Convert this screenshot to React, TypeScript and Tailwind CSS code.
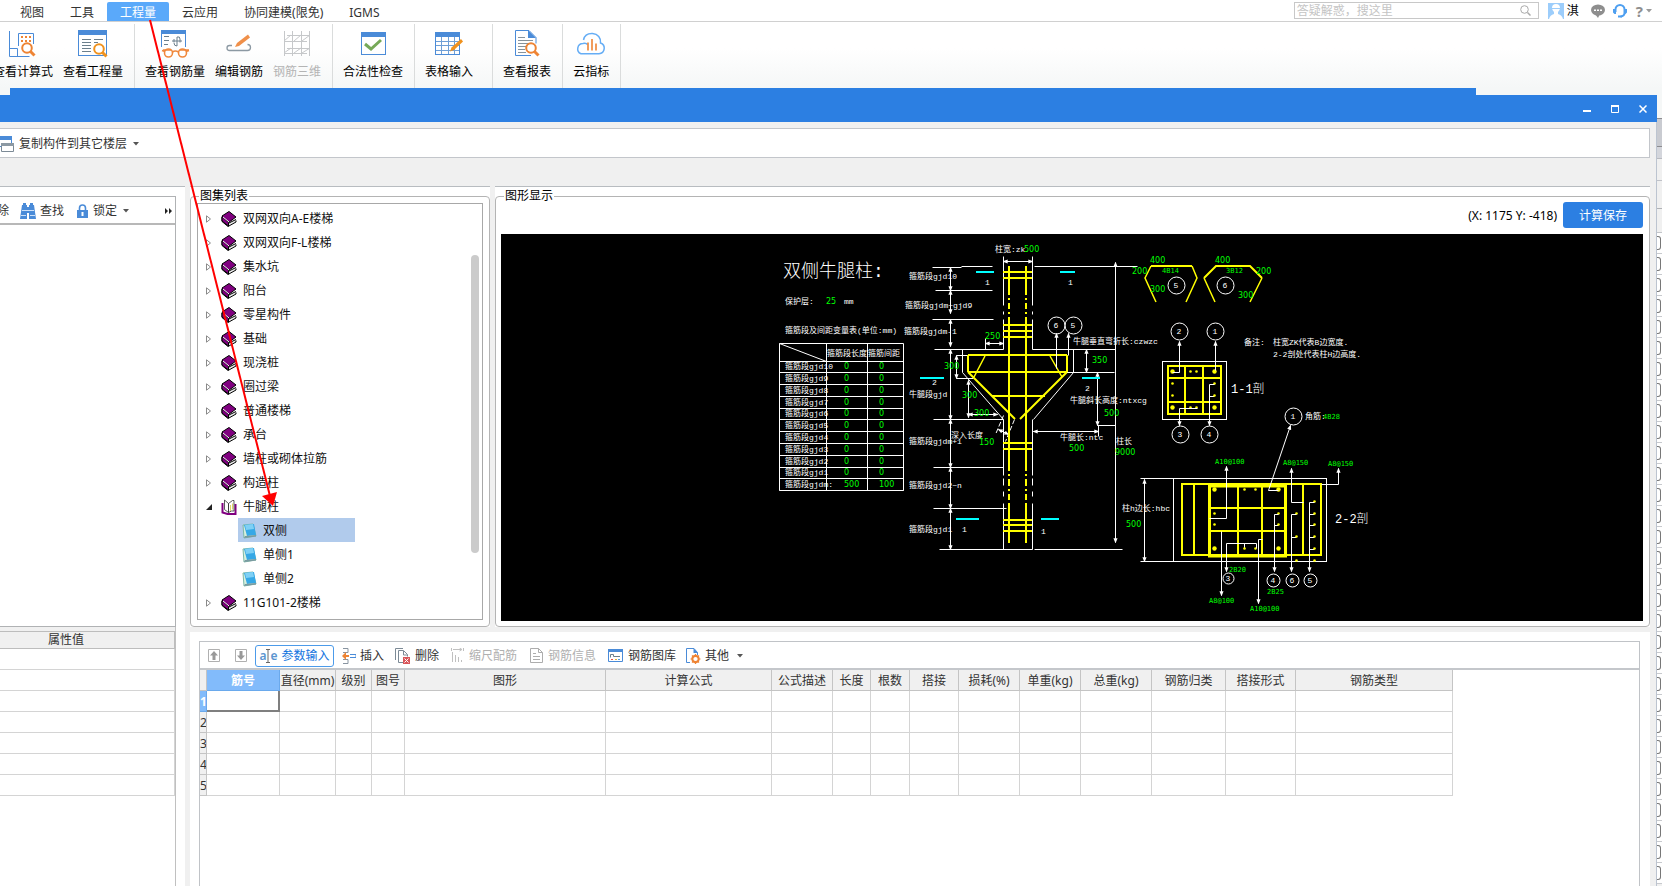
import type { ReactNode } from 'react'
import clsx from 'clsx'

const BLUE = '#4a8bd8'
const ORANGE = '#ee8434'

/* ---------- ribbon icons, 28x28 ---------- */

function Icon({ w = 28, h = 28, children }: { w?: number; h?: number; children: ReactNode }) {
  return (
    <svg width={w} height={h} viewBox={`0 0 ${w} ${h}`} fill="none" className="shrink-0" aria-hidden="true">
      {children}
    </svg>
  )
}

const Lens = ({ x, y, color = ORANGE }: { x: number; y: number; color?: string }) => (
  <g stroke={color}>
    <circle cx={x} cy={y} r="4.8" strokeWidth="2" fill="#fff" />
    <path d={`M${x + 3.5} ${y + 3.5}l4 4`} strokeWidth="3" />
  </g>
)

const FormulaIcon = () => (
  <Icon>
    <path d="M.5 1v25.500h20M.500 18.500h8v8M9.500 16V3.500h15V14" stroke={BLUE} />
    <path d="M12 6h2v2h-2zM16 6h2v2h-2zM20 6h2v2h-2zM12 10h2v2h-2zM16 10h2v2h-2zM20 10h2v2h-2z" fill={ORANGE} />
    <Lens x={18} y={18} />
  </Icon>
)

const QuantityIcon = () => (
  <Icon w={30}>
    <rect x=".5" y="-.5" width="28" height="26" stroke={BLUE} />
    <path d="M0 0h29v5H0z" fill={BLUE} />
    <path d="M4 9.500h9M4 12.500h9M4 15.500h9M4 18.500h9M4 21.500h9M16 9.500h9M16 12.500h4" stroke="#6b7f8c" />
    <Lens x={21} y={19} color="#f0921e" />
  </Icon>
)

const RebarViewIcon = () => (
  <Icon w={30}>
    <path d="M1.500 17V.5h24V17" stroke={BLUE} />
    <path d="M1 0h25v4H1z" fill={BLUE} />
    <path d="M4 6.500h5M4 10.500h5M4 14.500h4M12 11h10M17 7v9M14 9v3.500M20 9v3.500M17 7q3-1 3 2M17 16q-3 0-3-3" stroke="#6b7f8c" />
    <g stroke="#f0883c" strokeWidth="1.600">
      <circle cx="8.500" cy="23" r="4" fill="#fff" />
      <circle cx="22.500" cy="23" r="4" fill="#fff" />
      <path d="M12.500 22q2.700-2 6 0M2 20.500l3 1M29 20.500l-3 1M3 20h8M20 20h9" />
    </g>
  </Icon>
)

const RebarEditIcon = () => (
  <Icon>
    <path d="M7 15.500H4.500a2.500 2.500 0 0 0 0 5h18a3 3 0 0 0 0-6" stroke="#8c99a3" strokeWidth="1.300" />
    <path d="M23 4.500l2 3L14 16l-4 1 2-4z" fill="#f0904a" />
  </Icon>
)

const Rebar3dIcon = () => (
  <Icon>
    <path
      d="M1.500 1v25M9.500 1v25M18.500 1v25M26.500 1v25M4 5.500h23M1 11.500h23M4 18.500h23M1 23.500h23M1 11l7-6M11 11l7-6M19 11l8-6M1 23l7-5M11 23l7-5M19 23l8-5"
      stroke="#c6c8ca"
    />
  </Icon>
)

const CheckIcon = () => (
  <Icon>
    <rect x="2.500" y="2.500" width="24" height="22" stroke={BLUE} />
    <path d="M2 2h25v5H2z" fill={BLUE} />
    <path d="M6 14l6 5 10-9" stroke="#76a958" strokeWidth="3" />
  </Icon>
)

const TableIcon = () => (
  <Icon>
    <rect x=".5" y="2.500" width="24" height="22" stroke={BLUE} />
    <path d="M0 2h25v5H0z" fill={BLUE} />
    <path d="M6.500 7v17M13.500 7v17M19.500 7v17M1 11.500h23M1 15.500h23M1 20.500h23" stroke="#6f9fd6" />
    <path d="M26 9l2 2.500-9 8.500-4 1.500 1.500-4z" fill="#f0921e" />
  </Icon>
)

const ReportIcon = () => (
  <Icon>
    <path d="M18 25.500H2.500V.5H16l7 7v6" stroke={BLUE} />
    <path d="M15 0l8 8h-8z" fill={BLUE} />
    <path d="M5 7.500h7M5 10.500h15M5 13.500h12M5 16.500h8M5 19.500h7M5 22.500h8" stroke="#87939c" />
    <Lens x={18} y={18} />
  </Icon>
)

const CloudIcon = () => (
  <Icon w={32}>
    <path d="M8 13.500A5.300 5.300 0 0 0 6 23.700h18a5.500 5.500 0 0 0 1.500-10.700C26 8 23 4 17.500 3.600 13 3.400 9.500 5 8.500 10M8 13.500q3-1 4.500 1" stroke="#65adf5" strokeWidth="1.500" />
    <path d="M13 20.500v-8M17 20.500V9M21 20.500v-7" stroke={ORANGE} strokeWidth="1.600" />
  </Icon>
)

/* ---------- small icons ---------- */

const BookIcon = () => (
  <Icon w={16} h={16}>
    <path d="M1 6v4.500l6 5 8-4.500v-1.500" fill="#e8e8e8" stroke="#000" />
    <path d="M7 12.500l8-4" stroke="#000" />
    <path d="M1 5l7-4.500L15 6l-7.500 5.500z" fill="#800080" stroke="#000" />
    <path d="M1 5.500l6.500 6v3.500L1 10z" fill="#800080" stroke="#000" />
    <path d="M2 6l6 5" stroke="#fff" />
  </Icon>
)

const OpenBookIcon = () => (
  <Icon w={16} h={16}>
    <path d="M1.500 4v9.500l5 1.500h8V5" stroke="#800080" strokeWidth="2" />
    <path d="M3.500 1l4 3.500v9l-4-3zM7.500 4.500l4-3h1.500v10.500h-2.500l-3 1.500z" fill="#fff" stroke="#333" strokeWidth=".8" />
    <path d="M9.500 6v6M11.500 4.500v6" stroke="#e0d468" />
  </Icon>
)

const NoteIcon = () => (
  <Icon w={15} h={16}>
    <path d="M1 2l10-1 3 12-12 2z" fill="#d7f0dd" stroke="#7db8a8" />
    <path d="M2 2l10-1 2 11-9 1z" fill="#36a8e6" />
    <path d="M3 2l8-1 1 5-8 1z" fill="#7fd0f5" />
    <path d="M3 13l11-1v1.500L2 15z" fill="#7a9aa0" />
  </Icon>
)

const CaretDown = ({ className = 'text-[#555]' }: { className?: string }) => (
  <svg width="6" height="4" viewBox="0 0 6 4" className={clsx('shrink-0', className)} aria-hidden="true">
    <path d="M0 0h6L3 3.500z" fill="currentColor" />
  </svg>
)

/* ---------- CAD drawing ---------- */

type Line = [number, number, number, number]

const WHITE_LINES: Line[] = [
  // column outline
  [1003, 256, 1003, 305], [1003, 311, 1003, 314], [1003, 319, 1003, 349],
  [1003, 419, 1003, 475], [1003, 478, 1003, 485], [1003, 491, 1003, 496], [1003, 503, 1003, 549],
  [1032, 256, 1032, 305], [1032, 311, 1032, 314], [1032, 319, 1032, 349],
  [1032, 419, 1032, 475], [1032, 478, 1032, 485], [1032, 491, 1032, 496], [1032, 503, 1032, 549],
  // stirrup zone limits
  [932, 267, 961, 267], [961, 266, 992, 266], [1034, 266, 1137, 266], [935, 290, 992, 290],
  [932, 319, 993, 319], [934, 349, 1003, 349], [1032, 349, 1115, 349], [933, 419, 1003, 419],
  [933, 467, 1003, 467], [933, 508, 1006, 508], [939, 549, 1032, 549], [1034, 549, 1122, 549],
  // dimension extensions
  [956, 355, 968, 355], [956, 378, 973, 378], [985, 338, 985, 349],
  [1050, 372, 1114, 372], [1097, 425, 1115, 425], [1098, 425, 1098, 436],
  [962, 349, 962, 372], [1073, 349, 1073, 372],
  // 2-2 section
  [1140, 478, 1173, 478], [1140, 561, 1173, 561],
  [1274, 525, 1278, 525], [1291, 537, 1296, 537], [1309, 514, 1314, 514], [1309, 525, 1314, 525],
  [1309, 537, 1314, 537], [1309, 549, 1314, 549], [1244, 543, 1244, 548], [1209, 396, 1214, 396],
]

// arrow heads on both ends
const DIMENSIONS: Line[] = [
  [1003, 261, 1032, 261], [950, 267, 950, 290], [950, 290, 950, 313], [950, 319, 950, 346],
  [950, 349, 950, 419], [950, 419, 950, 467], [950, 467, 950, 508], [950, 508, 950, 549],
  [956, 355, 956, 378], [968, 380, 968, 417], [968, 414, 997, 414], [985, 343, 1003, 343],
  [998, 429, 1008, 434], [1086, 349, 1086, 372], [1097, 372, 1097, 425], [1033, 431, 1098, 431],
  [1115, 262, 1115, 542], [1144, 479, 1144, 561],
]

// arrow head on the last point
const LEADERS = [
  'M1056 368V333', 'M1068 355V333',
  'M1172 372H1179V341', 'M1215 370V341', 'M1197 408H1179V425', 'M1214 384H1209V425',
  'M1278 490H1268L1290 425', 'M1209 518H1226V466', 'M1303 502H1291V468', 'M1321 484H1338V468',
  'M1278 514H1274V571', 'M1296 514H1291V571', 'M1314 502H1309V571', 'M1221 531V595',
  'M1256 548V543H1226V571', 'M1262 539H1258V603',
]

const YELLOW_LINES: Line[] = [
  ...[272, 278, 325, 331, 337, 443, 449, 520, 525, 531].map((y): Line => [1003, y, 1032, y]),
  ...[1009, 1026].flatMap((x): Line[] => [
    [x, 266, x, 295], [x, 298, x, 300], [x, 303, x, 309], [x, 312, x, 314], [x, 317, x, 471],
    [x, 474, x, 476], [x, 479, x, 486], [x, 489, x, 491], [x, 494, x, 500], [x, 503, x, 543],
  ]),
  [968, 355, 1067, 355], [968, 372, 1067, 372], [968, 355, 968, 372], [1067, 355, 1067, 372],
  [968, 372, 1015, 419], [1067, 372, 1020, 419], [992, 396, 1045, 396],
  [1185, 366, 1185, 414], [1203, 366, 1203, 414], [1168, 378, 1221, 378], [1168, 402, 1221, 402],
  [1194, 484, 1194, 555], [1303, 484, 1303, 555], [1238, 486, 1238, 556], [1262, 486, 1262, 556],
  [1209, 508, 1286, 508], [1209, 531, 1286, 531],
]

const CYAN_LINES: Line[] = [
  [976, 272, 994, 272], [1060, 272, 1075, 272], [920, 378, 944, 378],
  [1082, 378, 1100, 378], [956, 519, 979, 519], [1041, 519, 1059, 519],
]

const BIG_BARS = [[1172, 371], [1214, 371], [1172, 407], [1214, 407], [1214, 489], [1278, 489], [1214, 548], [1278, 548]]
const BARS = [
  [1190, 371], [1196, 371], [1172, 383], [1172, 395], [1214, 383], [1214, 395], [1190, 407], [1196, 407],
  [1244, 489], [1255, 489], [1214, 513], [1214, 524], [1244, 548], [1255, 548], [1278, 513], [1278, 524],
  [1296, 513], [1296, 536], [1296, 560], [1314, 501], [1314, 513], [1314, 524], [1314, 536], [1314, 548], [1314, 560],
]

const BALLOONS: [number, number, number, string][] = [
  [1056, 325, 9, '6'], [1073, 325, 9, '5'], [1176, 285, 9, '5'], [1225, 285, 9, '6'],
  [1179, 331, 9, '2'], [1215, 331, 9, '1'], [1180, 434, 9, '3'], [1209, 434, 9, '4'],
  [1293, 416, 9, '1'], [1228, 578, 6, '3'], [1273, 580, 7, '4'], [1292, 580, 7, '6'], [1310, 580, 7, '5'],
]

const LABELS: [number, number, string][] = [
  [785, 304, '保护层:'], [844, 304, 'mm'], [785, 333, '箍筋段及间距变量表(单位:mm)'],
  [827, 356, '箍筋段长度'], [868, 356, '箍筋间距'], [995, 252, '柱宽:zk'],
  [909, 279, '箍筋段gjd10'], [905, 308, '箍筋段gjdm~gjd9'], [904, 334, '箍筋段gjdm-1'],
  [909, 397, '牛腿段gjd'], [951, 438, '深入长度'], [909, 444, '箍筋段gjdm+1'],
  [909, 488, '箍筋段gjd2~n'], [909, 532, '箍筋段gjd1'],
  [985, 285, '1'], [1068, 285, '1'], [932, 385, '2'], [1085, 391, '2'], [962, 532, '1'], [1041, 534, '1'],
  [1073, 344, '牛腿垂直弯折长:czwzc'], [1070, 403, '牛腿斜长高度:ntxcg'], [1060, 440, '牛腿长:ntc'],
  [1116, 444, '柱长'], [1244, 345, '备注:'], [1273, 345, '柱宽ZK代表B边宽度.'],
  [1273, 357, '2-2剖处代表柱H边高度.'], [1305, 419, '角筋:'], [1122, 511, '柱h边长:hbc'],
]

const VALUES: [number, number, string][] = [
  [826, 304, '25'], [1024, 252, '500'], [985, 339, '250'], [944, 369, '300'], [962, 398, '300'],
  [974, 416, '300'], [979, 445, '150'], [1092, 363, '350'], [1104, 416, '500'], [1069, 451, '500'],
  [1115, 455, '9000'], [1150, 263, '400'], [1132, 274, '200'], [1150, 292, '300'],
  [1215, 263, '400'], [1256, 274, '200'], [1238, 298, '300'], [1126, 527, '500'],
]

const SPECS: [number, number, string][] = [
  [1162, 273, '4B14'], [1226, 273, '3B12'], [1323, 419, '4B28'], [1215, 464, 'A10@100'],
  [1283, 465, 'A8@150'], [1328, 466, 'A8@150'], [1229, 572, '2B20'], [1267, 594, '2B25'],
  [1209, 603, 'A8@100'], [1250, 611, 'A10@100'],
]

const SPACING_ROWS = ['gjd10', 'gjd9', 'gjd8', 'gjd7', 'gjd6', 'gjd5', 'gjd4', 'gjd3', 'gjd2', 'gjd1', 'gjdm:']
const SPACING_Y = [372, 384, 396, 408, 419, 431, 443, 455, 467, 478, 490]

const toPath = (lines: Line[]) => lines.map(([a, b, c, d]) => `M${a} ${b}L${c} ${d}`).join('')

function CorbelDrawing() {
  return (
    <svg viewBox="501 234 1142 387" className="block w-full bg-black" fill="none" role="img" aria-label="双侧牛腿柱">
      <defs>
        <marker id="tip" viewBox="0 0 6 6" refX="5" refY="3" markerWidth="5" markerHeight="5" orient="auto-start-reverse">
          <path d="M0 .5L6 3 0 5.500z" fill="#fff" />
        </marker>
      </defs>

      <g transform="translate(.5 .5)" stroke="#fff">
        <path d={toPath(WHITE_LINES)} />
        <path d="M962 372L1003 419M1073 372L1033 419" />
        <path d="M1003 415L995 434M1014 419L1005 441" strokeDasharray="5 2" />
        {DIMENSIONS.map(([a, b, c, d], i) => (
          <path key={i} d={`M${a} ${b}L${c} ${d}`} markerStart="url(#tip)" markerEnd="url(#tip)" />
        ))}

        {/* stirrup spacing table */}
        <path d="M779 343H903V490H779zM826 343V490M867 343V490M779 343L826 361M779 361H903" />
        <path d={SPACING_Y.map(y => `M779 ${y}H903`).join('')} />

        <rect x="1162" y="361" width="64" height="58" />
        <rect x="1173" y="478" width="153" height="83" />
      </g>

      <g stroke="#ff0" strokeWidth="2">
        <path d={toPath(YELLOW_LINES)} />
        <rect x="1168" y="366" width="53" height="48" />
        <rect x="1182" y="484" width="139" height="71" />
        <rect x="1209.500" y="486" width="76" height="70" strokeWidth="3" />
        <path d="M1151 266H1192M1204 278L1216 266H1250L1262 278" />
        <path
          d="M1156 302L1145 278 1151 266M1192 266L1197 278 1186 302M1215 302L1204 278M1262 278L1250 302M985 356L974 377M1050 356L1062 377"
          strokeWidth="1.500"
        />
      </g>

      <g fill="#ff0">
        {BIG_BARS.map(([x, y]) => <circle key={`${x}-${y}`} cx={x + 0.5} cy={y + 0.5} r="2.200" />)}
        {BARS.map(([x, y]) => <circle key={`${x}-${y}`} cx={x + 0.5} cy={y + 0.5} r="1.300" />)}
      </g>

      <path d={toPath(CYAN_LINES)} stroke="#0ff" strokeWidth="2" />

      <g transform="translate(.5 .5)" stroke="#fff">
        {LEADERS.map(d => <path key={d} d={d} markerEnd="url(#tip)" />)}
        {BALLOONS.map(([x, y, r]) => <circle key={`${x}-${y}`} cx={x} cy={y} r={r - 0.5} />)}
      </g>

      <g fill="#fff" className="font-['Liberation_Mono','Noto_Sans_CJK_SC',monospace] text-[8px]">
        <text x="783" y="277" className="text-[18px] font-light">双侧牛腿柱:</text>
        <text x="1231" y="393" className="text-[12px] font-light">1-1剖</text>
        <text x="1335" y="523" className="text-[12px] font-light">2-2剖</text>
        {LABELS.map(([x, y, t]) => <text key={`${x}-${y}`} x={x} y={y}>{t}</text>)}
        {SPACING_ROWS.map((t, i) => <text key={t} x="785" y={SPACING_Y[i] - 3}>{`箍筋段${t}`}</text>)}
        {BALLOONS.map(([x, y, , t]) => <text key={`${x}-${y}`} x={x} y={y + 3} textAnchor="middle">{t}</text>)}
      </g>

      <g fill="#0f0" className="font-['DejaVu_Sans',sans-serif] text-[8px]">
        {VALUES.map(([x, y, t]) => <text key={`${x}-${y}`} x={x} y={y}>{t}</text>)}
        {SPACING_ROWS.map((t, i) => (
          <g key={t}>
            <text x="844" y={SPACING_Y[i] - 3}>{t === 'gjdm:' ? '500' : '0'}</text>
            <text x="879" y={SPACING_Y[i] - 3}>{t === 'gjdm:' ? '100' : '0'}</text>
          </g>
        ))}
      </g>
      <g fill="#0f0" className="font-['DejaVu_Sans_Mono',monospace] text-[7px]">
        {SPECS.map(([x, y, t]) => <text key={`${x}-${y}`} x={x} y={y}>{t}</text>)}
      </g>
    </svg>
  )
}

/* ---------- top of the main window ---------- */

function MenuBar() {
  return (
    <header className="flex h-[22px] items-end border-b border-[#d0d0d0] bg-white">
      <nav className="flex text-[#333]">
        <a href="#view" className="ml-2 px-3 pt-[2px] leading-[17px]">视图</a>
        <a href="#tools" className="ml-[2px] px-3 pt-[2px] leading-[17px]">工具</a>
        <a href="#quantity" className="ml-px rounded-t-xs bg-[#5aa9fa] px-[13px] pt-[2px] leading-[17px] text-white">工程量</a>
        <a href="#cloud" className="px-[13px] pt-[2px] leading-[17px]">云应用</a>
        <a href="#modeling" className="px-[13px] pt-[2px] leading-[17px]">协同建模(限免)</a>
        <a href="#igms" className="px-[13px] pt-[2px] leading-[17px]">IGMS</a>
      </nav>
      <div className="mb-[2px] ml-auto flex items-center">
        <label className="flex h-[17px] w-[245px] items-center border border-[#c8c8c8] bg-white pr-[7px] pl-[2px]">
          <input type="text" aria-label="搜索" placeholder="答疑解惑，搜这里" className="min-w-0 flex-1 pt-px text-xs leading-[14px] outline-none placeholder:text-[#c4c4c4]" />
          <Icon w={11} h={11}>
            <circle cx="4.500" cy="4.500" r="3.800" stroke="#aaa" />
            <path d="M7.500 7.500l3 3" stroke="#aaa" strokeWidth="1.500" />
          </Icon>
        </label>
        <button className="ml-[9px] flex items-center gap-[3px] leading-4 text-black">
          <svg width="16" height="16" viewBox="0 0 16 16" aria-hidden="true">
            <path d="M0 0h16v16H0z" fill="#9ccdfb" />
            <path d="M1 16q1-4 5-5V9Q4 7 4 5q0-4 4-4t4 4q0 2-2 4v2q4 1 5 5z" fill="#fff" />
            <path d="M4 5.500h8" stroke="#9ccdfb" />
          </svg>
          淇
        </button>
        <button aria-label="消息" className="ml-[12px]">
          <Icon w={14} h={14}>
            <ellipse cx="7" cy="6" rx="7" ry="5.500" fill="#8e8e8e" />
            <path d="M4 10l3 4 2-4z" fill="#8e8e8e" />
            <path d="M3 5.500h2v1.500H3zM6 5.500h2v1.500H6zM9 5.500h2v1.500H9z" fill="#fff" />
          </Icon>
        </button>
        <button aria-label="客服" className="ml-[8px]">
          <Icon w={14} h={14}>
            <path d="M2.500 8V5.500a4.500 4.500 0 0 1 9 0V9q0 3-4 3.500" stroke="#4e9ff0" strokeWidth="2" />
            <path d="M0 5h3v5H1.500L0 8.500zM11 5h3v3.500L12.500 10H11zM5 11.500h4v2H5z" fill="#4e9ff0" />
          </Icon>
        </button>
        <button aria-label="帮助" className="mr-[10px] ml-[9px] flex items-center gap-[3px] text-[15px] leading-4 font-bold text-[#8e8e8e]">
          ?
          <CaretDown className="text-[#9a9a9a]" />
        </button>
      </div>
    </header>
  )
}

interface RibbonItem {
  label: string
  icon: ReactNode
  disabled?: boolean
}

const RIBBON: RibbonItem[][] = [
  [{ label: '查看计算式', icon: <FormulaIcon /> }, { label: '查看工程量', icon: <QuantityIcon /> }],
  [
    { label: '查看钢筋量', icon: <RebarViewIcon /> },
    { label: '编辑钢筋', icon: <RebarEditIcon /> },
    { label: '钢筋三维', icon: <Rebar3dIcon />, disabled: true },
  ],
  [{ label: '合法性检查', icon: <CheckIcon /> }],
  [{ label: '表格输入', icon: <TableIcon /> }],
  [{ label: '查看报表', icon: <ReportIcon /> }],
  [{ label: '云指标', icon: <CloudIcon /> }],
]

function Ribbon() {
  return (
    <div className="flex h-[66px] bg-linear-to-b from-white from-40% to-[#f5f7f7] pt-[2px]">
      {RIBBON.map((group, i) => (
        <div
          key={i}
          className={clsx(
            'flex gap-[10px] border-r border-[#dadcdc] pt-[6px] pr-[11px]',
            i === 0 ? '-ml-[7px]' : 'pl-[10px]',
            i === 3 && 'pr-[19px]',
          )}
        >
          {group.map(item => (
            <button
              key={item.label}
              disabled={item.disabled}
              className={clsx('flex flex-col items-center gap-[6px] leading-4 whitespace-nowrap', item.disabled ? 'text-[#b4b4b4]' : 'text-black')}
            >
              {item.icon}
              {item.label}
            </button>
          ))}
        </div>
      ))}
    </div>
  )
}

/* ---------- dialog panes ---------- */

function ComponentPane() {
  return (
    <div className="flex flex-1 flex-col border-t border-[#b8bcc0] bg-white pt-[9px]">
      <div className="mr-[9px] flex flex-1 flex-col border-t border-r border-b border-[#b0b2b4]">
        <div className="flex h-[28px] items-center overflow-hidden border-b-2 border-[#b8b8b8] pt-[2px] text-[#333]">
          <button className="-ml-[3px] leading-4">除</button>
          <button className="ml-[11px] flex items-center gap-1 leading-4">
            <Icon w={16} h={16}>
              <path d="M3 0h3v2h1v2h2V2h1V0h3v2h1l2 14H9v-6H7v6H0L2 2h1z" fill={BLUE} />
              <path d="M2 7.500h12M1 12.500h5M10 12.500h5" stroke="#cfe2f8" />
            </Icon>
            查找
          </button>
          <button className="ml-[13px] flex items-center gap-[5px] leading-4">
            <Icon w={11} h={14}>
              <path d="M2.500 6V4a3 3 0 0 1 6 0v2" stroke={BLUE} strokeWidth="1.600" />
              <path d="M0 6h11v8H0z" fill={BLUE} />
              <path d="M5.500 8v4" stroke="#fff" strokeWidth="2" />
            </Icon>
            锁定
            <span className="ml-px"><CaretDown /></span>
          </button>
          <button aria-label="更多" className="mr-[3px] ml-auto">
            <Icon w={7} h={6}>
              <path d="M0 0l3 3-3 3zM4 0l3 3-3 3z" fill="#222" />
            </Icon>
          </button>
        </div>
      </div>
    </div>
  )
}

function PropertyPane() {
  return (
    <div className="flex flex-1 bg-white">
      <div className="mr-[9px] flex-1 border-r border-[#c0c0c0]">
        <div className="h-1 bg-[#f0f0f0]" />
        <table className="w-full table-fixed border-separate border-spacing-0">
          <thead>
            <tr>
              <th className="h-[18px] border-t border-r border-b border-[#bdbdbd] bg-[#f0f0f0] p-0 pr-[42px] text-center leading-4 font-normal text-[#333]">
                属性值
              </th>
            </tr>
          </thead>
          <tbody>
            {Array.from({ length: 7 }).map((_, i) => (
              <tr key={i}><td className="h-[21px] border-r border-b border-[#d4d4d4] p-0" /></tr>
            ))}
          </tbody>
        </table>
      </div>
    </div>
  )
}

interface TreeNode {
  label: string
  children?: string[]
}

const ATLAS: TreeNode[] = [
  { label: '双网双向A-E楼梯' },
  { label: '双网双向F-L楼梯' },
  { label: '集水坑' },
  { label: '阳台' },
  { label: '零星构件' },
  { label: '基础' },
  { label: '现浇桩' },
  { label: '圈过梁' },
  { label: '普通楼梯' },
  { label: '承台' },
  { label: '墙柱或砌体拉筋' },
  { label: '构造柱' },
  { label: '牛腿柱', children: ['双侧', '单侧1', '单侧2'] },
  { label: '11G101-2楼梯' },
]

function AtlasTree() {
  return (
    <fieldset className="min-w-0 flex-1 rounded-[4px] border border-[#b4b4b4] px-[6px] pb-[6px]">
      <legend className="ml-[2px] px-px leading-[14px]">图集列表</legend>
      <div className="relative border border-[#a8a8a8] pt-[2px] pb-[5px] text-[#111]">
        <ul>
          {ATLAS.map(node => (
            <li key={node.label}>
              <button className="flex h-6 w-full items-center pt-[2px] pl-2 text-left">
                <svg width="6" height="8" viewBox="0 0 6 8" className="mr-[9px] shrink-0" fill="none" aria-hidden="true">
                  {node.children ? <path d="M6 1v6H0z" fill="#222" /> : <path d="M.5.8v6.400L4.500 4z" stroke="#8a8a8a" />}
                </svg>
                {node.children ? <OpenBookIcon /> : <BookIcon />}
                <span className="ml-[6px]">{node.label}</span>
              </button>
              {node.children && (
                <ul className="ml-10">
                  {node.children.map((child, i) => (
                    <li key={child}>
                      <button className={clsx('flex h-6 w-[117px] items-center gap-[6px] pt-[2px] pl-1 text-left', i === 0 && 'bg-[#b1cbec]')}>
                        <NoteIcon />
                        {child}
                      </button>
                    </li>
                  ))}
                </ul>
              )}
            </li>
          ))}
        </ul>
        <div className="absolute top-[51px] right-[3px] h-[298px] w-2 rounded-full bg-[#cbcbcb]" />
      </div>
    </fieldset>
  )
}

function DrawingPane() {
  return (
    <fieldset className="min-w-0 flex-1 rounded-[4px] border border-[#b4b4b4] pr-[6px] pb-[5px] pl-[5px]">
      <legend className="ml-[3px] px-px leading-[14px]">图形显示</legend>
      <div className="flex h-[31px] items-start justify-end gap-[6px]">
        <output className="leading-[26px] text-black">(X: 1175 Y: -418)</output>
        <button className="-mt-px h-[26px] w-20 rounded-[3px] bg-[#2c7fe2] pt-px text-white">计算保存</button>
      </div>
      <CorbelDrawing />
    </fieldset>
  )
}

function RebarToolbar() {
  const gray = '#b0b0b0'
  return (
    <div className="flex h-[28px] items-center border-b-2 border-[#c4c7cb] pt-px pl-2 leading-4 whitespace-nowrap text-[#333]">
      <button aria-label="上移" disabled>
        <Icon w={12} h={13}>
          <path d="M.5.5h11v12H.5z" stroke={gray} />
          <path d="M6 2l4 4.500H7.500V11h-3V6.500H2z" fill="#999" />
        </Icon>
      </button>
      <button aria-label="下移" disabled className="ml-[15px]">
        <Icon w={12} h={13}>
          <path d="M.5.5h11v12H.5z" stroke={gray} />
          <path d="M6 11L2 6.500h2.500V2h3v4.500H10z" fill="#999" />
        </Icon>
      </button>
      <button className="ml-2 flex h-[22px] w-[79px] items-center justify-center gap-[4px] rounded-[3px] border border-[#4c9bea] text-[#1374e0]">
        <span className="flex items-center text-xs font-semibold text-[#5b95cf]" aria-hidden="true">
          a
          <Icon w={4} h={14}><path d="M0 .5h4M2 1v12M0 13.500h4" stroke="#666" /></Icon>
          e
        </span>
        参数输入
      </button>
      <button className="ml-2 flex items-center gap-1">
        <Icon w={14} h={16}>
          <path d="M1 .5h5v4H1M1 15.500h5v-4H1" stroke="#8894a0" />
          <path d="M0 8l4-4v3h3v2H4v3z" fill={ORANGE} />
          <path d="M8 6.500h6v3H8" stroke={BLUE} />
        </Icon>
        插入
      </button>
      <button className="ml-[11px] flex items-center gap-1">
        <Icon w={16} h={16}>
          <path d="M.5 12V.5H8M3.500 14.500v-12h5l4 4v2M8.500 3v4h4M3.500 14.500h5" stroke="#7c8a96" />
          <path d="M8 9h7v7H8z" fill="#d9565a" />
          <path d="M9.500 10.500l4 4M13.500 10.500l-4 4" stroke="#fff" />
        </Icon>
        删除
      </button>
      <button disabled className="ml-3 flex items-center gap-[5px] text-[#b0b0b0]">
        <Icon w={13} h={15}>
          <path d="M1.500 4v10M4.500 7v7M7.500 9v5M10.500 12v2" stroke="#c0c0c0" />
          <path d="M2 1.500h8M8.500 0L11 1.500 8.500 3M12.500 0v3M.5 0v3" stroke="#c0c0c0" />
        </Icon>
        缩尺配筋
      </button>
      <button disabled className="ml-[13px] flex items-center gap-[5px] text-[#b0b0b0]">
        <Icon w={13} h={15}>
          <path d="M.5.5h8l4 4v10H.5zM8.500.5v4h4M3 5.500h3M3 8.500h7M3 11.500h7" stroke="#adadad" />
        </Icon>
        钢筋信息
      </button>
      <button className="ml-3 flex items-center gap-[5px]">
        <Icon w={15} h={13}>
          <path d="M.5.5h14v12H.5z" stroke={BLUE} />
          <path d="M0 0h15v3H0z" fill={BLUE} />
          <path d="M2.500 8.500v-3h3v2H12" stroke="#6b7f8c" />
          <path d="M3 10.500h2" stroke="#e05050" /><path d="M7 10.500h2" stroke="#e0b030" /><path d="M10 10.500h2" stroke="#50a0e0" />
        </Icon>
        钢筋图库
      </button>
      <button className="ml-[10px] flex items-center gap-[4px]">
        <Icon w={15} h={16}>
          <path d="M4 14.500H.5V.5H8l3.500 4V7" stroke={BLUE} />
          <path d="M7.500 0L12 5H7.500z" fill={BLUE} />
          <circle cx="9.500" cy="11" r="3.200" stroke={ORANGE} strokeWidth="2" />
          <path d="M9.500 6v10M4.500 11h10M6 7.500l7 7M13 7.500l-7 7" stroke={ORANGE} strokeWidth="1.200" />
          <circle cx="9.500" cy="11" r="2" fill="#fff" />
        </Icon>
        其他
        <span className="ml-1"><CaretDown /></span>
      </button>
    </div>
  )
}

const COLUMNS: [string, string][] = [
  ['筋号', 'w-[73px]'], ['直径(mm)', 'w-[56px]'], ['级别', 'w-[36px]'], ['图号', 'w-[33px]'],
  ['图形', 'w-[201px]'], ['计算公式', 'w-[166px]'], ['公式描述', 'w-[61px]'], ['长度', 'w-[38px]'],
  ['根数', 'w-[39px]'], ['搭接', 'w-[49px]'], ['损耗(%)', 'w-[61px]'], ['单重(kg)', 'w-[61px]'],
  ['总重(kg)', 'w-[71px]'], ['钢筋归类', 'w-[74px]'], ['搭接形式', 'w-[70px]'], ['钢筋类型', 'w-[157px]'],
]

function RebarTable() {
  return (
    <table className="w-[1253px] table-fixed border-separate border-spacing-0 leading-4 text-[#333]">
      <thead>
        <tr>
          <td className="h-[21px] w-[7px] border-r border-b border-[#c4c4c4] bg-[#f0f0f0] p-0" />
          {COLUMNS.map(([name, width], i) => (
            <th
              key={name}
              scope="col"
              className={clsx(
                'h-[21px] overflow-hidden border-r border-b p-0 pt-[2px] text-center whitespace-nowrap',
                width,
                i === 0 ? 'border-[#6aa9ec] bg-[#82bbfb] font-bold text-white' : 'border-[#c4c4c4] bg-[#f0f0f0] font-normal',
              )}
            >
              {name}
            </th>
          ))}
        </tr>
      </thead>
      <tbody>
        {[1, 2, 3, 4, 5].map(n => (
          <tr key={n}>
            <th
              scope="row"
              className={clsx(
                'h-[21px] overflow-hidden border-r border-b p-0 pt-[2px] text-left',
                n === 1 ? 'border-[#6aa9ec] bg-[#82bbfb] font-bold text-white' : 'border-[#c4c4c4] bg-[#f0f0f0] font-normal',
              )}
            >
              {n}
            </th>
            {COLUMNS.map(([name], i) => (
              <td
                key={name}
                className={clsx('p-0', n === 1 && i === 0 ? 'border-r-2 border-b-2 border-[#7f7f7f]' : 'border-r border-b border-[#d4d4d4]')}
              />
            ))}
          </tr>
        ))}
      </tbody>
    </table>
  )
}

// sliver of the window behind the dialog
function BackgroundEdge() {
  return (
    <div className="w-[5px] shrink-0 overflow-hidden bg-[#f0f0f0]">
      <div className="h-6 border-b border-[#8c8c90] bg-[#f5f7f7]" />
      <div className="h-7 border-b border-[#8c8c90] bg-[#c9cbd1]" />
      <div className="h-3 border-b border-[#b8bac0] bg-[#d4d6dc]" />
      <div className="h-[22px] border-b border-[#c0c2c8]" />
      <div className="h-7 border-b border-[#b0b2b6]" />
      <div className="h-6 border-b border-[#c4c6ca]" />
      {Array.from({ length: 31 }).map((_, i) => (
        <div key={i} className="h-[21px] border-b border-[#c8cace] bg-white pt-[3px]">
          <div className="h-[14px] w-1 rounded-r-[3px] border-y border-r border-[#777]" />
        </div>
      ))}
    </div>
  )
}

function RebarDialog() {
  return (
    <section className="flex min-w-0 flex-1 flex-col border-r border-[#bcc4d0] bg-[#f0f0f0]">
      <div className="-mr-px flex h-[27px] items-center justify-end bg-[#2c7fe2] pr-[10px]">
        <button aria-label="最小化" className="mr-5">
          <Icon w={8} h={8}><path d="M0 6h8" stroke="#fff" strokeWidth="2" /></Icon>
        </button>
        <button aria-label="最大化" className="mr-5">
          <Icon w={8} h={8}><path d="M.5 1v6.500h7V1" stroke="#fff" /><path d="M0 1h8" stroke="#fff" strokeWidth="2" /></Icon>
        </button>
        <button aria-label="关闭">
          <Icon w={8} h={8}><path d="M.5.5l7 7M7.500.5l-7 7" stroke="#fff" strokeWidth="1.500" /></Icon>
        </button>
      </div>

      <div className="mt-[6px] mr-[6px] flex h-[30px] items-center border-y border-r border-[#c3c6cb] bg-white pt-px">
        <button className="flex items-center gap-[5px] leading-4 text-[#333]">
          <Icon w={14} h={16}>
            <path d="M0 0h12v4H0z" fill={BLUE} />
            <path d="M11.500 4v4M0 10.500h2" stroke={BLUE} />
            <path d="M1.500 7.500h12v8h-12z" fill="#fff" stroke="#7c8a96" />
            <path d="M1 7h13v3H1z" fill="#8c99a3" />
          </Icon>
          复制构件到其它楼层
          <span className="ml-px"><CaretDown /></span>
        </button>
      </div>

      <div className="mt-7 mr-[6px] grid flex-1 grid-cols-[185px_minmax(0,1fr)] grid-rows-[auto_1fr] gap-x-[5px]">
        <div className="flex"><ComponentPane /></div>
        <div className="flex gap-[5px]">
          <div className="flex w-[300px] shrink-0 border-t border-[#b8bcc0] bg-white pt-[2px]"><AtlasTree /></div>
          <div className="flex min-w-0 flex-1 border-t border-[#b8bcc0] bg-white pt-[2px]"><DrawingPane /></div>
        </div>
        <div className="flex"><PropertyPane /></div>
        <div className="mt-[5px] flex bg-white pt-[9px] pr-[10px] pl-[9px]">
          <div className="min-w-0 flex-1 overflow-hidden border-t border-r border-l border-[#c0c3c7]">
            <RebarToolbar />
            <RebarTable />
          </div>
        </div>
      </div>
    </section>
  )
}

export default function App() {
  return (
    <div className="relative flex min-h-screen flex-col overflow-hidden bg-white font-['Noto_Sans','Noto_Sans_CJK_SC',sans-serif] text-xs">
      <MenuBar />
      <Ribbon />
      <div className="h-[7px] bg-[#f5f7f7] pr-[186px] pl-[10px]">
        <div className="h-full bg-[#2c7fe2]" />
      </div>
      <main className="flex flex-1">
        <RebarDialog />
        <BackgroundEdge />
      </main>

      <svg className="pointer-events-none absolute top-0 left-0" width="300" height="520" viewBox="0 0 300 520" aria-hidden="true">
        <path d="M150 20L270 496" stroke="#f00" strokeWidth="2" />
        <path d="M262 496l15-4-4 14z" fill="#f00" />
      </svg>
    </div>
  )
}
